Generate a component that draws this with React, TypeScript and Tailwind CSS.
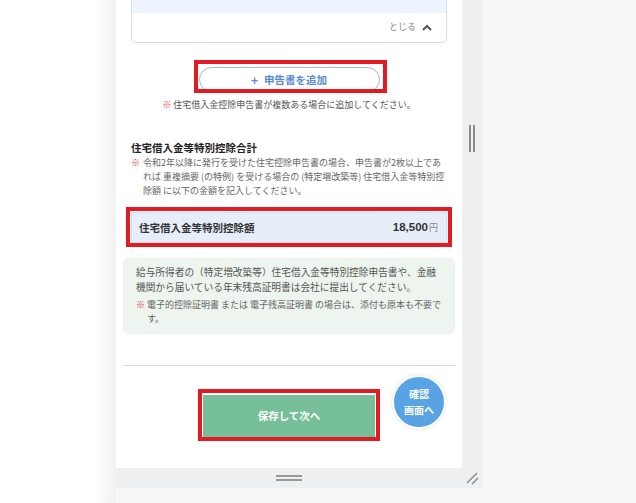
import React from 'react';

const jp = { fontFamily: '"Noto Sans CJK JP", "Noto Sans", sans-serif' };

const Kome = () => <span className="text-[#e5322d]">※</span>;

const App: React.FC = () => {
  return (
    <div className="w-[636px] h-[503px] flex bg-[#f7f7f8] overflow-hidden" style={jp}>
      {/* 左の余白 */}
      <div className="w-[116px] h-full bg-gradient-to-r from-white from-80% to-[#f1f1f2]" />

      {/* 本体 */}
      <div className="w-[366px] flex flex-col">
        <div className="flex h-[468px]">
          <div className="relative w-[346px] h-full bg-white">
            {/* 閉じるカード */}
            <div className="ml-[15px] w-[316px] h-[43px] border border-t-0 border-[#dcdde0] rounded-b-[5px] flex flex-col">
              <div className="h-[13px] bg-[#edf4fd]" />
              <div className="flex-1 flex items-center justify-end gap-[6px] pr-[14px] pb-[1px]">
                <span className="text-[9px] text-[#8a8a8a]">とじる</span>
                <svg width="10" height="7" viewBox="0 0 10 7">
                  <polyline points="1,6 5,2 9,6" fill="none" stroke="#555" strokeWidth="2" />
                </svg>
              </div>
            </div>

            {/* 申告書を追加 */}
            <div className="mt-[24px] flex justify-center">
              <div className="relative">
                <button className="w-[181px] h-[25px] rounded-full border border-[#a3b7da] bg-white text-[#5a8bd0] text-[10.5px] font-bold flex items-center justify-center gap-[6px]">
                  <span className="text-[12px] leading-none">+</span>
                  <span>申告書を追加</span>
                </button>
                <div className="absolute -left-[5px] -right-[7px] -top-[7px] -bottom-[1px] border-[4px] border-[#e11b22] pointer-events-none" />
              </div>
            </div>
            <p className="mt-[6px] text-center text-[9px] leading-[13px] text-[#555]">
              <Kome /> 住宅借入金控除申告書が複数ある場合に追加してください。
            </p>

            {/* 合計 */}
            <div className="px-[15px]">
              <h3 className="mt-[29px] text-[10.5px] leading-[15px] font-bold text-[#222]">住宅借入金等特別控除合計</h3>
              <div className="mt-[1px] flex text-[9px] leading-[14px] text-[#666] whitespace-nowrap">
                <span className="w-[12px] shrink-0"><Kome /></span>
                <div>
                  令和2年以降に発行を受けた住宅控除申告書の場合、申告書が2枚以上であ
                  <br />
                  れば 重複摘要 (の特例) を受ける場合の (特定増改築等) 住宅借入金等特別控
                  <br />
                  除額 に以下の金額を記入してください。
                </div>
              </div>

              <div className="relative mt-[14px]">
                <div className="h-[31px] bg-[#e5eef9] border border-[#d3dff0] flex items-center justify-between pl-[7px] pr-[8px]">
                  <span className="text-[10.5px] font-bold text-[#333]">住宅借入金等特別控除額</span>
                  <span className="flex items-baseline gap-[1px]">
                    <span className="text-[11.5px] font-bold text-[#333]" style={{ fontFamily: '"Liberation Sans", sans-serif' }}>18,500</span>
                    <span className="text-[9px] text-[#888]">円</span>
                  </span>
                </div>
                <div className="absolute -left-[5px] -right-[5px] -top-[5px] -bottom-[4px] border-[4px] border-[#e11b22] pointer-events-none" />
              </div>
            </div>

            {/* 提出案内 */}
            <div className="mx-[7px] mt-[15px] h-[76px] rounded-[5px] bg-[#edf5ee] px-[13px] pt-[7px] whitespace-nowrap">
              <p className="text-[9.7px] leading-[15px] text-[#555]">
                給与所得者の（特定増改築等）住宅借入金等特別控除申告書や、金融
                <br />
                機関から届いている年末残高証明書は会社に提出してください。
              </p>
              <div className="mt-[3px] flex text-[9px] leading-[14px] text-[#666]">
                <span className="w-[11px] shrink-0"><Kome /></span>
                <div>
                  電子的控除証明書 または 電子残高証明書 の場合は、添付も原本も不要で
                  <br />
                  す。
                </div>
              </div>
            </div>

            <div className="mx-[7px] mt-[31px] h-px bg-[#d9d9db]" />

            {/* 保存ボタン */}
            <div className="mt-[29px] flex justify-center">
              <div className="relative">
                <button className="w-[172px] h-[42px] bg-[#77bf98] text-white text-[10.5px] font-bold flex items-center justify-center">
                  保存して次へ
                </button>
                <div className="absolute -left-[5px] -right-[5px] -top-[6px] -bottom-[4px] border-[4px] border-[#e11b22] pointer-events-none" />
              </div>
            </div>

            {/* 確認画面へ */}
            <button className="absolute left-[276px] top-[375px] w-[54px] h-[54px] rounded-full bg-[#57a3e3] border-2 border-white shadow-[0_0_3px_rgba(0,0,0,0.15)] text-white text-[10px] leading-[16px] font-bold flex flex-col items-center justify-center">
              <span>確認</span>
              <span>画面へ</span>
            </button>
          </div>

          {/* 右のハンドル */}
          <div className="w-[20px] h-full bg-[#eeeff1] pt-[125px] pl-[7px] flex gap-[2px]">
            <div className="w-[2px] h-[27px] bg-[#8c8c8c]" />
            <div className="w-[2px] h-[27px] bg-[#8c8c8c]" />
          </div>
        </div>

        {/* 下のハンドル */}
        <div className="h-[20px] bg-[#eeeff1] flex items-center">
          <div className="w-[346px] flex flex-col items-center gap-[2px]">
            <div className="w-[26px] h-[2px] bg-[#9a9a9a]" />
            <div className="w-[26px] h-[2px] bg-[#9a9a9a]" />
          </div>
          <svg width="20" height="20" viewBox="0 0 20 20">
            <line x1="5" y1="15" x2="15" y2="5" stroke="#8a8a8a" strokeWidth="1.5" />
            <line x1="10" y1="16" x2="16" y2="10" stroke="#8a8a8a" strokeWidth="1.5" />
          </svg>
        </div>
      </div>
    </div>
  );
};

export default App;
